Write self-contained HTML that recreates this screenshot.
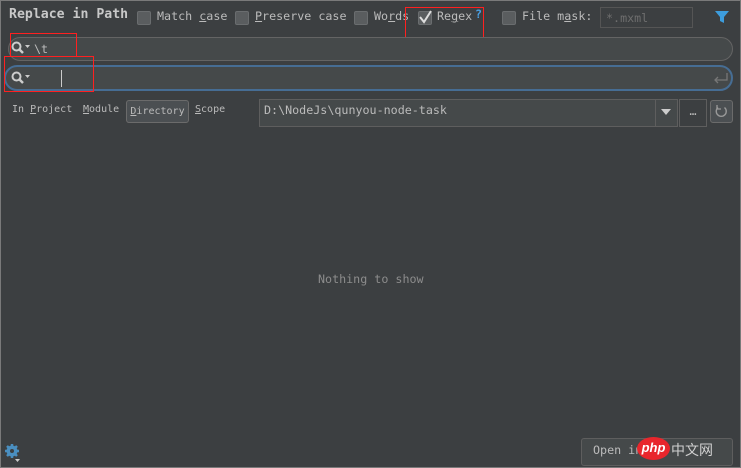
<!DOCTYPE html><html><head><style>
body{margin:0;width:741px;height:468px;background:#3c3f41;font-family:"DejaVu Sans Mono","Liberation Mono",monospace;color:#bbbbbb;font-size:11.7px;position:relative;overflow:hidden}
.frame{position:absolute;left:0;top:0;width:739px;height:466px;border:1px solid #7a7a7a}
.a{position:absolute;white-space:nowrap}
.cb{position:absolute;width:12px;height:12px;background:#5a5d5f;border:1px solid #6a6d6f;border-radius:2px;top:11px}
.red{position:absolute;border:1px solid #ff2020}
u{text-decoration:underline}
</style></head><body>
<div class="frame"></div>
<div class="a" style="left:9px;top:7px;font-weight:bold;font-size:13.2px;color:#c8c8c8">Replace in Path</div>
<div class="cb" style="left:137px"></div><div class="a" style="left:157px;top:9px">Match <u>c</u>ase</div>
<div class="cb" style="left:235px"></div><div class="a" style="left:255px;top:9px"><u>P</u>reserve case</div>
<div class="cb" style="left:354px"></div><div class="a" style="left:374px;top:9px">Wo<u>r</u>ds</div>
<div class="cb" style="left:418px"></div>
<svg class="a" style="left:418px;top:10px" width="14" height="14"><path d="M2 7L6 12L13 1" stroke="#ddd" stroke-width="2" fill="none"/></svg>
<div class="a" style="left:437px;top:9px">Re<u>g</u>ex</div><div class="a" style="left:475px;top:7px;color:#4a9ee0;font-weight:bold">?</div>
<div class="red" style="left:405px;top:7px;width:77px;height:29px"></div>
<div class="cb" style="left:502px"></div><div class="a" style="left:522px;top:9px">File m<u>a</u>sk:</div>
<div class="a" style="left:600px;top:7px;width:93px;height:21px;border:1px solid #555;color:#6e6e6e;line-height:21px;padding-left:5px;box-sizing:border-box">*.mxml</div>
<svg class="a" style="left:714px;top:10px" width="16" height="14"><path d="M1 1H15L10 7V13L6 11V7Z" fill="#3d9ddd"/></svg>
<div class="a" style="left:8px;top:37px;width:725px;height:24px;border:1px solid #646464;border-radius:12px;box-sizing:border-box;background:#45494a"></div>
<svg class="a" style="left:11px;top:41px" width="22" height="14"><circle cx="5.5" cy="5.5" r="4" stroke="#ccc" stroke-width="2" fill="none"/><path d="M8.5 8.5L12 12" stroke="#ccc" stroke-width="2.5"/><path d="M14 4h5l-2.5 3z" fill="#ccc"/></svg>
<div class="a" style="left:34px;top:42px">\t</div>
<div class="red" style="left:10px;top:33px;width:65px;height:22px"></div>
<div class="a" style="left:4px;top:65px;width:729px;height:26px;border:2px solid #466d94;border-radius:13px;box-sizing:border-box;background:#45494a"></div>
<svg class="a" style="left:11px;top:71px" width="22" height="14"><circle cx="5.5" cy="5.5" r="4" stroke="#ccc" stroke-width="2" fill="none"/><path d="M8.5 8.5L12 12" stroke="#ccc" stroke-width="2.5"/><path d="M14 4h5l-2.5 3z" fill="#ccc"/></svg>
<div class="a" style="left:61px;top:70px;width:1px;height:17px;background:#ccc"></div>
<div class="red" style="left:4px;top:56px;width:88px;height:34px"></div>
<svg class="a" style="left:713px;top:72px" width="16" height="12"><path d="M14 1V8H2M5 5L2 8L5 11" stroke="#777" stroke-width="1.3" fill="none"/></svg>
<div class="a" style="left:12px;top:104px;font-size:10px">In <u>P</u>roject</div>
<div class="a" style="left:83px;top:104px;font-size:10px"><u>M</u>odule</div>
<div class="a" style="left:126px;top:100px;width:63px;height:23px;border:1px solid #6b6b6b;border-radius:3px;background:#4b4f52;box-sizing:border-box;font-size:10px;line-height:21px;text-align:center"><u>D</u>irectory</div>
<div class="a" style="left:195px;top:104px;font-size:10px"><u>S</u>cope</div>
<div class="a" style="left:259px;top:99px;width:419px;height:28px;border:1px solid #5e5e5e;background:#45494a;box-sizing:border-box;padding:3px 0 0 4px">D:\NodeJs\qunyou-node-task</div>
<div class="a" style="left:655px;top:99px;width:1px;height:28px;background:#5e5e5e"></div>
<svg class="a" style="left:661px;top:108px" width="10" height="8"><path d="M0 1H10L5 7Z" fill="#ccc"/></svg>
<div class="a" style="left:679px;top:99px;width:28px;height:28px;border:1px solid #5e5e5e;box-sizing:border-box;text-align:center;line-height:22px">…</div>
<div class="a" style="left:710px;top:100px;width:23px;height:23px;border:1px solid #6b6b6b;background:#4b4f52;border-radius:3px;box-sizing:border-box"></div>
<svg class="a" style="left:714px;top:104px" width="15" height="15"><path d="M10.5 3.5A5 5 0 1 1 4 3.5" stroke="#999" stroke-width="1.4" fill="none"/><path d="M3 1V5H7" stroke="#999" stroke-width="1.3" fill="none"/></svg>
<div class="a" style="left:318px;top:272px;color:#8c8c8c">Nothing to show</div>
<svg class="a" style="left:4px;top:443px" width="18" height="20"><circle cx="8" cy="8" r="5.5" fill="#4a8fc0"/><g stroke="#4a8fc0" stroke-width="2.5"><path d="M8 1V15M1 8H15M3 3L13 13M13 3L3 13"/></g><circle cx="8" cy="8" r="2" fill="#3c3f41"/><path d="M11 16h5l-2.5 3z" fill="#ccc"/></svg>
<div class="a" style="left:581px;top:438px;width:152px;height:28px;border:1px solid #5e5e5e;border-radius:3px;background:#45494a;box-sizing:border-box;padding:4px 0 0 11px">Open in</div>
<div class="a" style="left:637px;top:437px;width:33px;height:23px;border-radius:50%;background:#e8262c;color:#fff;font-family:'Liberation Sans',sans-serif;font-style:italic;font-weight:bold;font-size:13px;text-align:center;line-height:22px">php</div>
<div class="a" style="left:671px;top:440px;font-family:'Liberation Sans','Noto Sans CJK SC',sans-serif;font-size:14px;color:#d0d0d0">中文网</div>
</body></html>
